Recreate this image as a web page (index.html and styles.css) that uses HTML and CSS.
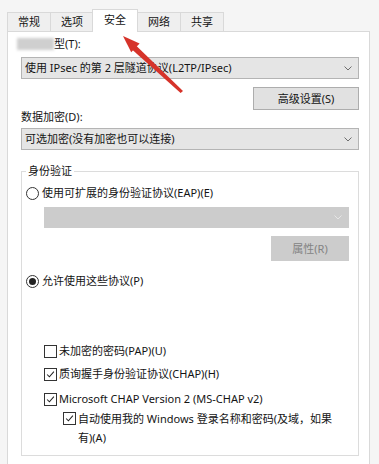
FILE: index.html
```html
<!DOCTYPE html>
<html lang="zh-CN">
<head>
  <meta charset="UTF-8"/>
  <meta name="viewport" content="width=device-width,initial-scale=1"/>
  <title>VPN 属性 – 安全</title>
  <link rel="stylesheet" href="styles.css">
</head>
<body>

  <div class="window">
    <div class="tabs">
      <div class="tab">常规</div>
      <div class="tab">选项</div>
      <div class="tab active">安全</div>
      <div class="tab">网络</div>
      <div class="tab">共享</div>
    </div>

    <div class="panel">
      <div class="label"><span class="blur"></span>型(T):</div>
      <div class="select">
        <span>使用 IPsec 的第 2 层隧道协议(L2TP/IPsec)</span>
        <svg class="chev" width="8" height="5" viewBox="0 0 8 5"><polyline points="0.5,0.5 4,4 7.5,0.5"/></svg>
      </div>
      <div class="row-right"><div class="btn">高级设置(S)</div></div>

      <div class="label">数据加密(D):</div>
      <div class="select">
        <span>可选加密(没有加密也可以连接)</span>
        <svg class="chev" width="8" height="5" viewBox="0 0 8 5"><polyline points="0.5,0.5 4,4 7.5,0.5"/></svg>
      </div>

      <fieldset class="group">
        <legend>身份验证</legend>
        <div class="opt"><span class="radio"></span>使用可扩展的身份验证协议(EAP)(E)</div>
        <div class="select disabled sub">
          <span></span>
          <svg class="chev" width="8" height="5" viewBox="0 0 8 5"><polyline points="0.5,0.5 4,4 7.5,0.5"/></svg>
        </div>
        <div class="row-right"><div class="btn btn-off">属性(R)</div></div>

        <div class="opt opt-2"><span class="radio on"></span>允许使用这些协议(P)</div>

        <div class="checks">
          <div class="check c1"><span class="box"></span>未加密的密码(PAP)(U)</div>
          <div class="check c2"><span class="box"><svg viewBox="0 0 13 13"><polyline points="2.5,6.5 5.2,9.2 10.5,3.2"/></svg></span>质询握手身份验证协议(CHAP)(H)</div>
          <div class="check c3"><span class="box"><svg viewBox="0 0 13 13"><polyline points="2.5,6.5 5.2,9.2 10.5,3.2"/></svg></span>Microsoft CHAP Version 2 (MS-CHAP v2)</div>
          <div class="check c4"><span class="box"><svg viewBox="0 0 13 13"><polyline points="2.5,6.5 5.2,9.2 10.5,3.2"/></svg></span><span class="wrap">自动使用我的 Windows 登录名称和密码(及域，如果有)(A)</span></div>
        </div>
      </fieldset>
    </div>

    <!-- red pointer on the 安全 tab -->
    <svg class="arrow" width="379" height="464" viewBox="0 0 379 464">
      <polygon points="183,91 180.6,93 132,49.5 136,45.5"/>
      <polygon points="123,36 139.6,43.6 131.2,52.2"/>
    </svg>
  </div>

</body>
</html>
```

FILE: styles.css
```css
*{box-sizing:border-box;margin:0;padding:0}
body{background:#f5f5f5;color:#141414;font-family:"Noto Sans","Noto Sans CJK SC",sans-serif;font-size:11px;line-height:14px;overflow:hidden}
.window{position:relative;padding:9px 0 0 7px;width:370px;height:464px}

.tabs{display:flex;align-items:flex-end;height:22px}
.tab{height:19px;width:44px;margin-right:-1px;border:1px solid #d9d9d9;border-bottom:none;background:#efefef;display:flex;align-items:center;justify-content:center}
.tab.active{height:23px;width:46px;margin:0 -1px -1px -1px;background:#fff;position:relative;z-index:1;padding-bottom:3px}

.panel{background:#fff;border:1px solid #d9d9d9;width:363px;height:440px;padding:5px 10px 0 13px}
.label{height:14px;display:flex;align-items:center}
.blur{display:inline-block;width:37px;height:12px;margin-left:-4px;background:#cfcfcf;filter:blur(1.5px)}

.select{margin-top:6px;height:22px;border:1px solid #b4b4b4;background:#e5e5e5;display:flex;align-items:center;justify-content:space-between;padding:0 6px 0 3px}
.row-right + .label + .select{margin-top:4px}
.chev{fill:none;stroke:#6e6e6e;stroke-width:1}
.select.disabled{background:#cccccc;border-color:#cccccc}
.select.disabled .chev{stroke:#e6e6e6}

.row-right{display:flex;justify-content:flex-end;margin-top:8px}
.btn{width:106px;height:23px;border:1px solid #adadad;background:#e1e1e1;display:flex;align-items:center;justify-content:center}
.btn-off{width:78px;height:25px;background:#cccccc;border-color:#cccccc;color:#838383}

.group{margin-top:14px;border:1px solid #dcdcdc;padding:0 9px 8px 4px}
.group legend{padding:0 2px;line-height:14px}
.opt{display:flex;align-items:center;height:14px;margin-top:8px}
.opt-2{margin-top:13px}
.radio{width:13px;height:13px;border:1px solid #333;border-radius:50%;margin-right:3px;display:flex;align-items:center;justify-content:center;background:#fff}
.radio.on::after{content:"";width:7px;height:7px;border-radius:50%;background:#222}
.sub{margin:7px 0 0 18px;height:21px}

.checks{margin-left:18px}
.check{display:flex;align-items:center;height:14px}
.c1{margin-top:56px}
.c2{margin-top:9px}
.c3{margin-top:11px}
.c4{margin:3px 0 0 19px;height:auto;align-items:flex-start;line-height:19px}
.c4 .box{margin-top:3px}
.wrap{width:254px}
.box{flex:none;width:13px;height:13px;border:1px solid #333;margin-right:2px;background:#fff}
.box svg{display:block;width:11px;height:11px;fill:none;stroke:#222;stroke-width:1.2}

.arrow{position:absolute;left:0;top:0;pointer-events:none}
.arrow polygon{fill:#d6332a}
```
